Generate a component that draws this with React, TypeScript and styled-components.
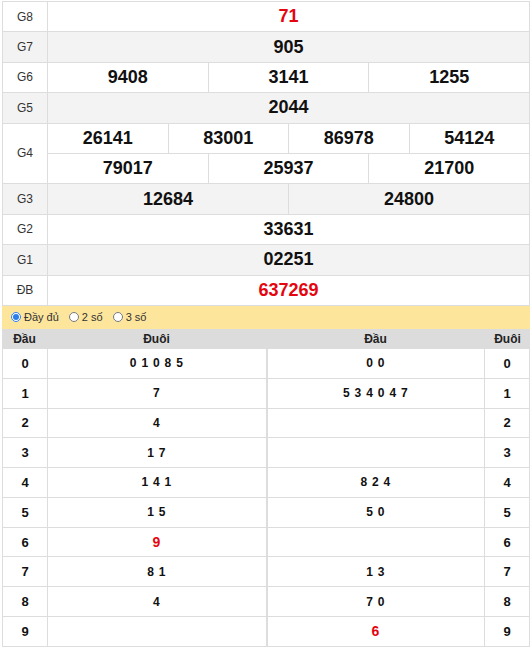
import React from "react";
import styled, { createGlobalStyle } from "styled-components";

const Global = createGlobalStyle`
  html, body { margin: 0; padding: 0; background: #fff; }
  body { font-family: "Liberation Sans", Arial, sans-serif; }
`;

const Page = styled.div`
  padding: 1px 2px 0;
  font-family: "Liberation Sans", Arial, sans-serif;
`;

const Results = styled.div`
  border-top: 1px solid #ddd;
  border-left: 1px solid #ddd;
`;

const PrizeRow = styled.div<{ $alt?: boolean }>`
  display: flex;
  background: ${(p) => (p.$alt ? "#f3f3f3" : "#fff")};
`;

const Label = styled.div`
  width: 45px;
  flex: none;
  box-sizing: border-box;
  display: flex;
  align-items: center;
  justify-content: center;
  border-right: 1px solid #ddd;
  border-bottom: 1px solid #ddd;
  font-size: 12px;
  color: #333;
`;

const Values = styled.div`
  flex: 1;
  display: flex;
  flex-direction: column;
`;

const NumLine = styled.div`
  display: flex;
  height: 30.4px;
`;

const Num = styled.div<{ $red?: boolean }>`
  flex: 1;
  box-sizing: border-box;
  display: flex;
  align-items: center;
  justify-content: center;
  border-right: 1px solid #ddd;
  border-bottom: 1px solid #ddd;
  font-size: 18px;
  font-weight: bold;
  color: ${(p) => (p.$red ? "#e4050f" : "#111")};
`;

const OptionBar = styled.div`
  height: 23px;
  box-sizing: border-box;
  background: #fde59c;
  display: flex;
  align-items: center;
  padding-left: 9px;
  gap: 10px;
  font-size: 11px;
  color: #333;
`;

const Option = styled.label`
  display: flex;
  align-items: center;
  gap: 2px;
`;

const Radio = styled.input`
  width: 10px;
  height: 10px;
  margin: 0 1px 0 0;
  accent-color: #2b7de9;
`;

const Loto = styled.div`
  border-left: 1px solid #ddd;
`;

const LotoHead = styled.div`
  display: grid;
  grid-template-columns: 45px 1fr 1fr 45px;
  height: 20px;
  background: #dcdcdc;
  margin-left: -1px;
`;

const HeadCell = styled.div`
  display: flex;
  align-items: center;
  justify-content: center;
  font-size: 12px;
  font-weight: bold;
  color: #222;
`;

const LotoRow = styled.div`
  display: grid;
  grid-template-columns: 45px 1fr 1fr 45px;
  height: 29.8px;
`;

const Cell = styled.div<{ $side?: boolean; $red?: boolean; $split?: boolean }>`
  box-sizing: border-box;
  display: flex;
  align-items: center;
  justify-content: center;
  border-bottom: 1px solid #ddd;
  border-right: 1px solid #ddd;
  border-left: ${(p) => (p.$split ? "1px solid #ddd" : "none")};
  font-weight: bold;
  font-size: ${(p) => (p.$red ? "14px" : p.$side ? "13px" : "12px")};
  letter-spacing: ${(p) => (p.$side ? "0" : "0.8px")};
  color: ${(p) => (p.$red ? "#e4050f" : "#111")};
  white-space: pre;
`;

type Prize = { label: string; lines: string[][]; red?: boolean };

const prizes: Prize[] = [
  { label: "G8", lines: [["71"]], red: true },
  { label: "G7", lines: [["905"]] },
  { label: "G6", lines: [["9408", "3141", "1255"]] },
  { label: "G5", lines: [["2044"]] },
  { label: "G4", lines: [["26141", "83001", "86978", "54124"], ["79017", "25937", "21700"]] },
  { label: "G3", lines: [["12684", "24800"]] },
  { label: "G2", lines: [["33631"]] },
  { label: "G1", lines: [["02251"]] },
  { label: "ĐB", lines: [["637269"]], red: true },
];

const dau = ["0 1 0 8 5", "7", "4", "1 7", "1 4 1", "1 5", "9", "8 1", "4", ""];
const duoi = ["0 0", "5 3 4 0 4 7", "", "", "8 2 4", "5 0", "", "1 3", "7 0", "6"];

export default function App() {
  return (
    <Page>
      <Global />
      <Results>
        {prizes.map((p, i) => (
          <PrizeRow key={p.label} $alt={i % 2 === 1}>
            <Label>{p.label}</Label>
            <Values>
              {p.lines.map((line, j) => (
                <NumLine key={j}>
                  {line.map((n, k) => (
                    <Num key={k} $red={p.red}>
                      {n}
                    </Num>
                  ))}
                </NumLine>
              ))}
            </Values>
          </PrizeRow>
        ))}
      </Results>
      <OptionBar>
        <Option>
          <Radio type="radio" name="mode" defaultChecked />
          Đầy đủ
        </Option>
        <Option>
          <Radio type="radio" name="mode" />2 số
        </Option>
        <Option>
          <Radio type="radio" name="mode" />3 số
        </Option>
      </OptionBar>
      <Loto>
        <LotoHead>
          <HeadCell>Đầu</HeadCell>
          <HeadCell>Đuôi</HeadCell>
          <HeadCell>Đầu</HeadCell>
          <HeadCell>Đuôi</HeadCell>
        </LotoHead>
        {dau.map((d, i) => (
          <LotoRow key={i}>
            <Cell $side>{i}</Cell>
            <Cell $red={i === 6}>{d}</Cell>
            <Cell $split $red={i === 9}>{duoi[i]}</Cell>
            <Cell $side>{i}</Cell>
          </LotoRow>
        ))}
      </Loto>
    </Page>
  );
}
